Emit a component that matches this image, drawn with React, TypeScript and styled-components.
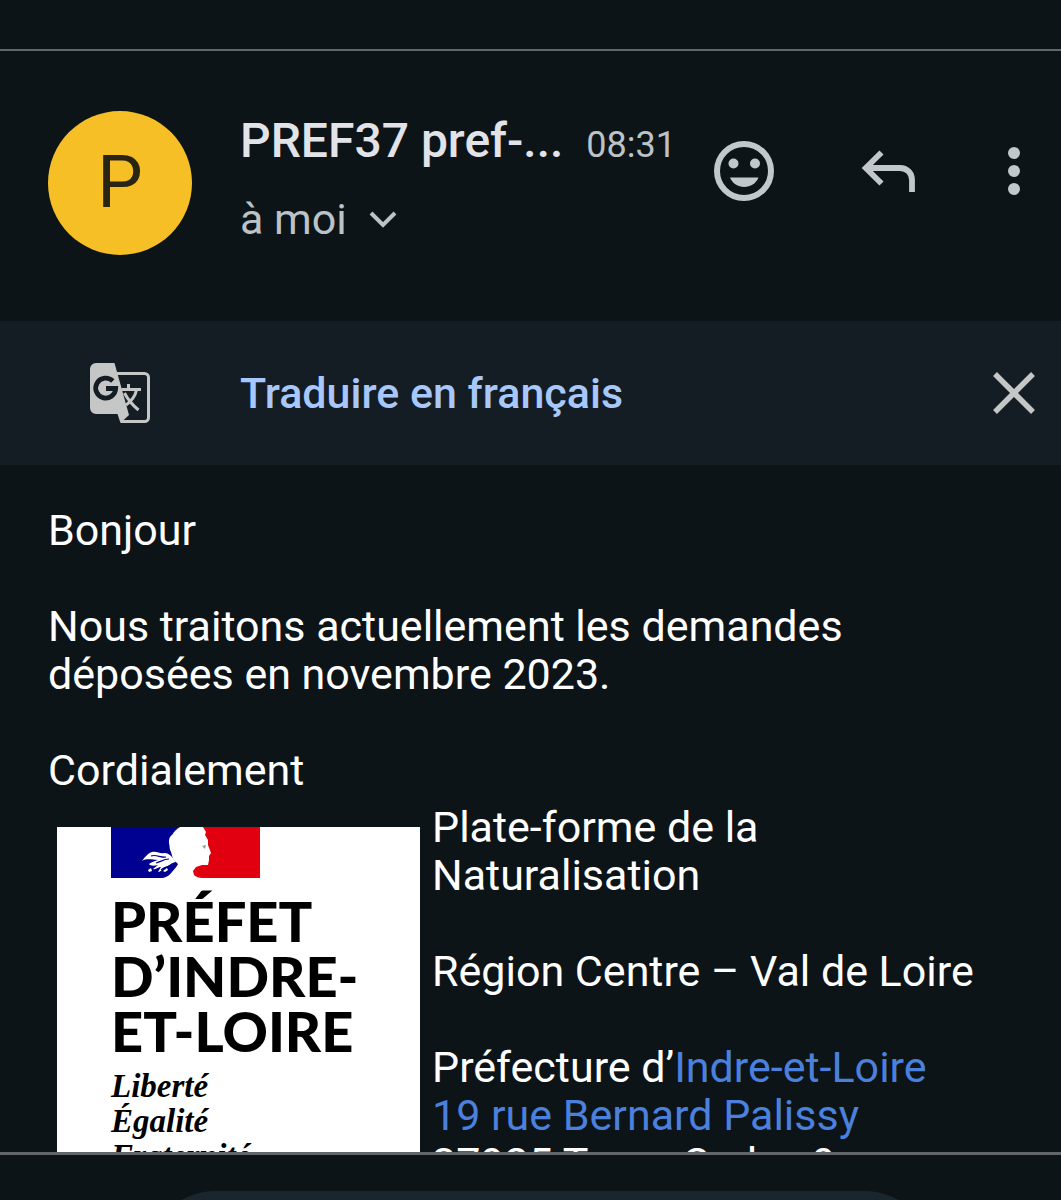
import React from "react";
import styled, { createGlobalStyle } from "styled-components";

const color = {
  page: "#0c1417",
  banner: "#151d24",
  pill: "#1a262e",
  rule: "#636669",
  icon: "#c2c7cc",
  bannerIcon: "#c4c7c5",
  title: "#e1e3e8",
  muted: "#bcc3c7",
  accent: "#a8c7fa",
  link: "#4b80dc",
  avatar: "#f6bf26",
};

const GlobalStyle = createGlobalStyle`
  *, *::before, *::after { box-sizing: border-box; }
  body {
    margin: 0;
    background: ${color.page};
    font-family: Roboto, "Liberation Sans", sans-serif;
  }
`;

const Screen = styled.main`
  display: flex;
  flex-direction: column;
  height: 100vh;
  overflow: hidden;
  background: ${color.page};
`;

const TopEdge = styled.div`
  flex: none;
  height: 51px;
  border-bottom: 2px solid ${color.rule};
`;

const Header = styled.header`
  flex: none;
  display: flex;
  align-items: flex-start;
  padding: 60px 11px 66px 48px;
`;

const Avatar = styled.div`
  flex: none;
  display: grid;
  place-items: center;
  width: 144px;
  height: 144px;
  margin-right: 48px;
  border-radius: 50%;
  background: ${color.avatar};
  color: #2a2415;
  font-size: 72px;
  line-height: 84px;
`;

const Sender = styled.div`
  flex: 1;
  min-width: 0;
  padding-right: 32px;
`;

const SenderLine = styled.div`
  display: flex;
  align-items: baseline;
  justify-content: space-between;
  gap: 12px;
  white-space: nowrap;
`;

const SenderName = styled.h1`
  margin: 0;
  color: ${color.title};
  font-size: 48px;
  line-height: 60px;
  font-weight: 500;
`;

const Time = styled.time`
  color: ${color.muted};
  font-size: 36px;
  line-height: 60px;
`;

const Recipient = styled.button`
  display: flex;
  align-items: center;
  gap: 20px;
  margin: 20px 0 0;
  padding: 0;
  border: 0;
  background: none;
  color: ${color.muted};
  font: inherit;
  font-size: 43px;
  line-height: 48px;
  cursor: pointer;
`;

const Actions = styled.div`
  display: flex;
  align-items: center;
  margin-top: 24px;
`;

const IconButton = styled.button<{ $gap?: number }>`
  flex: none;
  display: block;
  width: 72px;
  height: 72px;
  margin: 0 0 0 ${(p) => p.$gap ?? 0}px;
  padding: 0;
  border: 0;
  background: none;
  color: ${color.icon};
  cursor: pointer;

  svg {
    display: block;
    width: 72px;
    height: 72px;
  }
`;

const Banner = styled.section`
  flex: none;
  display: flex;
  align-items: center;
  height: 144px;
  padding: 0 11px 0 84px;
  background: ${color.banner};

  & > svg {
    flex: none;
    margin-right: 84px;
  }
`;

const TranslateButton = styled.button`
  margin: 0 auto 0 0;
  padding: 0;
  border: 0;
  background: none;
  color: ${color.accent};
  font: inherit;
  font-size: 43px;
  line-height: 48px;
  font-weight: 500;
  cursor: pointer;
`;

const Body = styled.article`
  flex: 1;
  min-height: 0;
  overflow: hidden;
  padding: 41px 48px 0;
  color: #fff;
  font-size: 43px;
  line-height: 48px;
`;

const Paragraph = styled.p`
  margin: 0 0 48px;
  &:last-child { margin-bottom: 0; }
`;

const Signature = styled.div`
  display: flex;
  align-items: flex-start;
  gap: 12px;
  margin-top: -39px;
  padding-left: 9px;
`;

const Card = styled.div`
  flex: none;
  width: 363px;
  height: 400px;
  margin-top: 24px;
  padding-left: 54px;
  background: #fff;
  color: #000;

  svg { display: block; }
`;

const CardTitle = styled.div`
  margin-top: 15px;
  font-family: Lato, "Open Sans", sans-serif;
  font-size: 56px;
  line-height: 55px;
  font-weight: 900;
  white-space: nowrap;
`;

const Motto = styled.div`
  margin-top: 11px;
  font-family: "Liberation Serif", serif;
  font-size: 33px;
  line-height: 35px;
  font-style: italic;
  font-weight: 700;
`;

const Address = styled.div`
  flex: 1;
  min-width: 0;
`;

const PlaceLink = styled.a`
  color: ${color.link};
  text-decoration: none;
`;

const Footer = styled.footer`
  flex: none;
  height: 48px;
  overflow: hidden;
  padding: 36px 125px 0 144px;
  border-top: 3px solid ${color.rule};
`;

const ReplyPill = styled.button`
  display: block;
  width: 100%;
  height: 144px;
  border: 0;
  border-radius: 72px;
  background: ${color.pill};
`;

const ChevronIcon = () => (
  <svg width="32" height="20" viewBox="0 0 32 20" fill="none" stroke="currentColor" strokeWidth="4" aria-hidden="true">
    <path d="M4 4l12 12L28 4" />
  </svg>
);

const SmileIcon = () => (
  <svg viewBox="0 0 72 72" fill="currentColor" aria-hidden="true">
    <circle cx="36" cy="36" r="27" fill="none" stroke="currentColor" strokeWidth="6" />
    <circle cx="25.500" cy="28.500" r="5" />
    <circle cx="47" cy="28.500" r="5" />
    <path d="M22 42.500h28.500C48 48.500 42.500 52 36.200 52S24.500 48.500 22 42.500z" />
  </svg>
);

const ReplyIcon = () => (
  <svg viewBox="0 0 72 72" fill="none" stroke="currentColor" strokeWidth="5.800" aria-hidden="true">
    <path d="M29.500 17.500L13.800 33l15.700 15.500M14 33h34c7 0 12 5 12 12v12" />
  </svg>
);

const MoreIcon = () => (
  <svg viewBox="0 0 72 72" fill="currentColor" aria-hidden="true">
    <circle cx="36" cy="18" r="6" />
    <circle cx="36" cy="36" r="6" />
    <circle cx="36" cy="54" r="6" />
  </svg>
);

const CloseIcon = () => (
  <svg viewBox="0 0 72 72" fill="none" stroke={color.bannerIcon} strokeWidth="5.500" aria-hidden="true">
    <path d="M17 17l38 38M55 17L17 55" />
  </svg>
);

const TranslateIcon = () => (
  <svg width="72" height="72" viewBox="-6 -6 72 72" fill="none" aria-hidden="true">
    <path d="M26 10.500h28.500a4 4 0 0 1 4 4v40a4 4 0 0 1-4 4H31" stroke={color.bannerIcon} strokeWidth="3" />
    <path d="M6 0h18.500L39 52l-8.500 8L27.500 51H6a6 6 0 0 1-6-6V6a6 6 0 0 1 6-6z" fill={color.bannerIcon} />
    <path d="M38.500 21v5M31.500 26.500H51M46.500 27c-1 5-5 11-10.500 15M34.500 30c3 6 8 12 14 17" stroke={color.bannerIcon} strokeWidth="3" />
    <path d="M22.800 18A10 10 0 1 0 25.700 25.500H16" stroke={color.banner} strokeWidth="4.800" />
  </svg>
);

const MarianneFlag = () => (
  <svg width="149" height="51" viewBox="0 0 149 51" aria-hidden="true">
    <path d="M0 0h69c-4 2-6 5-8 8-3 2-3 5-3 8 1 3 0 6 2 9l2 7 5 5c-1 3-4 5-6 8-2 3-5 5-9 6H0z" fill="#000091" />
    <path
      d="M31 34c3-4 6-8 10-9 5-1 8 2 12 1 4 0 6 2 8 4l4 5c-4 0-6 4-11 5-3 1-3 5-7 5l3-5c-3 0-5 3-8 2l5-4c-4 1-8 1-9-1 2-2 6-3 9-4-6 0-11-2-16 1z"
      fill="#fff"
    />
    <path d="M40 29c5-2 10 2 15 1M45 36c4-1 8-4 13-4M50 43c4-4 7-2 11-6" stroke="#000091" strokeWidth="1.200" fill="none" />
    <path d="M37 43l3-2 1 3-3 1zM52 44l4-3 1 2-3 2z" fill="#fff" />
    <path
      d="M92 0l3 5-1 3 3 5v5l3 8-2 3v4l-1 5h-6l-6 2-3 4 1 4c2 2 5 3 8 3h58V0z"
      fill="#e1000f"
    />
    <path d="M91 19l4-1-1 4z" fill="#9a9a9a" />
  </svg>
);

export default function App() {
  return (
    <>
      <GlobalStyle />
      <Screen>
        <TopEdge />
        <Header>
          <Avatar>P</Avatar>
          <Sender>
            <SenderLine>
              <SenderName>PREF37 pref-...</SenderName>
              <Time>08:31</Time>
            </SenderLine>
            <Recipient type="button">
              à moi
              <ChevronIcon />
            </Recipient>
          </Sender>
          <Actions>
            <IconButton type="button" aria-label="Réagir">
              <SmileIcon />
            </IconButton>
            <IconButton type="button" aria-label="Répondre" $gap={72}>
              <ReplyIcon />
            </IconButton>
            <IconButton type="button" aria-label="Plus" $gap={54}>
              <MoreIcon />
            </IconButton>
          </Actions>
        </Header>
        <Banner>
          <TranslateIcon />
          <TranslateButton type="button">Traduire en français</TranslateButton>
          <IconButton type="button" aria-label="Fermer">
            <CloseIcon />
          </IconButton>
        </Banner>
        <Body>
          <Paragraph>Bonjour</Paragraph>
          <Paragraph>
            Nous traitons actuellement les demandes
            <br />
            déposées en novembre 2023.
          </Paragraph>
          <Paragraph>Cordialement</Paragraph>
          <Signature>
            <Card>
              <MarianneFlag />
              <CardTitle>
                PRÉFET
                <br />
                D’INDRE-
                <br />
                ET-LOIRE
              </CardTitle>
              <Motto>
                Liberté
                <br />
                Égalité
                <br />
                Fraternité
              </Motto>
            </Card>
            <Address>
              <Paragraph>
                Plate-forme de la
                <br />
                Naturalisation
              </Paragraph>
              <Paragraph>Région Centre – Val de Loire</Paragraph>
              <Paragraph>
                Préfecture d’
                <PlaceLink href="#adresse">
                  Indre-et-Loire
                  <br />
                  19 rue Bernard Palissy
                </PlaceLink>
                <br />
                37925 Tours Cedex 9
              </Paragraph>
            </Address>
          </Signature>
        </Body>
        <Footer>
          <ReplyPill type="button" aria-label="Répondre au message" />
        </Footer>
      </Screen>
    </>
  );
}
